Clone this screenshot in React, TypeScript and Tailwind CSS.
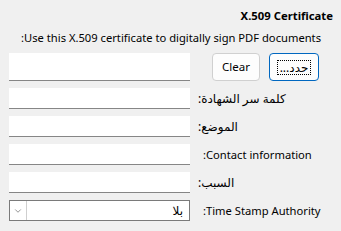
import { ChevronDown } from 'lucide-react';

const font = { fontFamily: '"Noto Sans", "DejaVu Sans", sans-serif' };

function TextBox() {
  return <div className="w-[181px] h-full bg-white border-b border-[#868686]" />;
}

function Row({ label, latin }: { label: string; latin?: boolean }) {
  return (
    <div className="flex items-center h-[21px]">
      <TextBox />
      <span
        dir="rtl"
        className={`leading-none text-black ${latin ? 'ml-[13px] text-[11.2px]' : 'ml-[8px] text-[12px]'}`}
      >
        {label}
      </span>
    </div>
  );
}

export default function App() {
  return (
    <div className="w-[341px] h-[231px] bg-[#f0f0f0] overflow-hidden" style={font}>
      <div className="pt-[7px] pr-[8px] text-right text-[11.3px] font-bold leading-[18px] text-black">
        X.509 Certificate
      </div>
      <div className="mt-[4px] pr-[20px] text-right text-[11.2px] leading-[18px] text-black">
        :Use this X.509 certificate to digitally sign PDF documents
      </div>

      <div className="mt-[6px] pl-[9px] flex flex-col gap-[7px]">
        <div className="flex items-center h-[28px]">
          <TextBox />
          <button className="ml-[22px] w-[48px] h-[28px] rounded-[4px] bg-[#fdfdfd] border border-[#d0d0d0] text-[11.5px] text-black">
            Clear
          </button>
          <button className="ml-[9px] w-[50px] h-[28px] rounded-[4px] bg-[#fdfdfd] border border-[#0067c0] flex items-center justify-center">
            <span dir="rtl" className="px-[2px] border border-dotted border-black text-[12px] leading-[13px] text-black">
              حدد...
            </span>
          </button>
        </div>
        <Row label="كلمة سر الشهادة:" />
        <Row label="الموضع:" />
        <Row label="Contact information:" latin />
        <Row label="السبب:" />
        <div className="flex items-center h-[21px]">
          <div className="w-[181px] h-full bg-white border border-[#7a7a7a] flex items-stretch">
            <div className="w-[17px] border-r border-[#cfcfcf] flex items-center justify-center">
              <ChevronDown size={10} strokeWidth={1.5} className="text-[#555]" />
            </div>
            <div dir="rtl" className="flex-1 pr-[6px] text-[12px] leading-[19px] text-black">
              بلا
            </div>
          </div>
          <span dir="rtl" className="ml-[13px] text-[11.2px] leading-none text-black">
            Time Stamp Authority:
          </span>
        </div>
      </div>
    </div>
  );
}
